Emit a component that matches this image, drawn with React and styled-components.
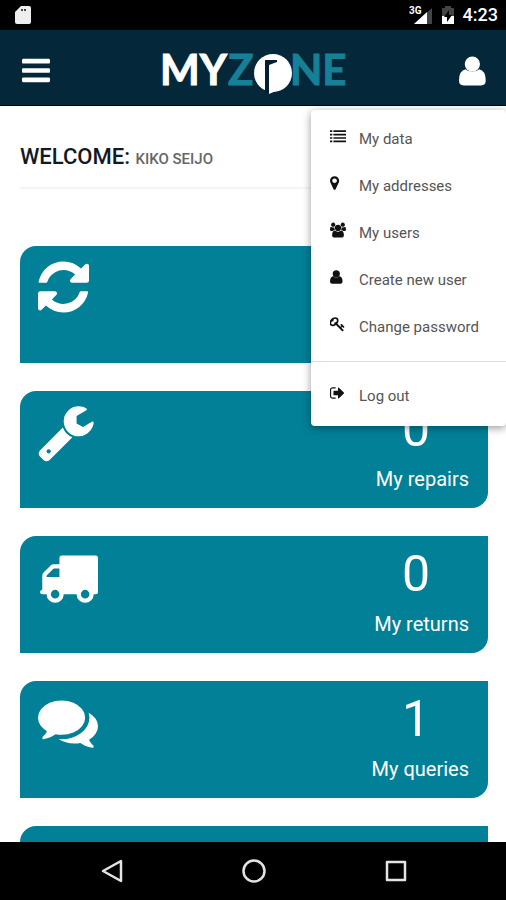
import React from 'react';
import styled, { createGlobalStyle } from 'styled-components';

const GlobalStyle = createGlobalStyle`
  * {
    box-sizing: border-box;
  }

  body {
    margin: 0;
    background-color: #fff;
    font-family: Roboto, sans-serif;
  }
`;

const Screen = styled.div`
  display: flex;
  flex-direction: column;
  height: 100vh;
  overflow: hidden;
`;

const StatusBar = styled.div`
  display: flex;
  flex-shrink: 0;
  align-items: center;
  gap: 8px;
  height: 30px;
  padding: 0 8px 0 14px;
  background-color: #000;
  color: #fff;
`;

const Clock = styled.time`
  font-size: 18px;
  font-weight: 500;
  line-height: 20px;
`;

const Signal = styled.svg`
  margin-left: auto;
`;

const Header = styled.header`
  position: relative;
  z-index: 1;
  display: flex;
  flex-shrink: 0;
  align-items: center;
  justify-content: space-between;
  height: 76px;
  padding: 6px 20px 0 22px;
  border-bottom: 1px solid #000;
  background-color: #04273a;
`;

const IconButton = styled.button`
  display: flex;
  padding: 0;
  border: 0;
  background: none;
  color: #fff;
`;

const Menu = styled.ul`
  position: absolute;
  top: 80px;
  right: 0;
  width: 195px;
  margin: 0;
  padding: 6px 0;
  border-radius: 4px;
  background-color: #fff;
  box-shadow: 0 2px 8px rgba(0, 0, 0, 0.4);
  list-style: none;
`;

const MenuItem = styled.li`
  ${({ divided }) => divided && `
    margin-top: 10px;
    padding-top: 11px;
    border-top: 1px solid #ddd;
  `}
`;

const MenuLink = styled.a`
  display: flex;
  gap: 13px;
  height: 47px;
  padding: 12px 18px 12px 19px;
  color: #555;
  font-size: 15px;
  line-height: 22px;
  text-decoration: none;
  white-space: nowrap;

  svg {
    color: #111;
  }
`;

const Content = styled.main`
  flex: 1;
  min-height: 0;
  overflow: hidden;
  padding: 36px 18px 0 20px;
`;

const Welcome = styled.h1`
  margin: 0 0 57px;
  padding-bottom: 16px;
  border-bottom: 2px solid #f4f4f4;
  color: #111a24;
  font-size: 22px;
  font-weight: 500;
  line-height: 29px;
`;

const UserName = styled.small`
  color: #666;
  font-size: 15px;
  line-height: 20px;
`;

const Cards = styled.div`
  display: flex;
  flex-direction: column;
  gap: 28px;
`;

const Card = styled.a`
  display: flex;
  justify-content: space-between;
  height: 117px;
  padding: 11px 19px 0 18px;
  border-radius: 16px 0;
  background-color: #028098;
  color: #fff;
  text-decoration: none;
`;

const CardInfo = styled.div`
  display: flex;
  flex-direction: column;
  align-items: flex-end;
`;

const Count = styled.span`
  padding-right: 39px;
  font-size: 50px;
  line-height: 54px;
`;

const CardLabel = styled.span`
  margin-top: 10px;
  font-size: 20px;
  line-height: 26px;
`;

const NavBar = styled.nav`
  display: flex;
  flex-shrink: 0;
  align-items: center;
  justify-content: center;
  gap: 116px;
  height: 58px;
  padding-left: 2px;
  background-color: #000;
`;

// [x, width, path], all glyphs are 1792 units high
const glyphs = {
  refresh: [128, 1536, 'M1639 1056q0 5-1 7-64 268-268 434.5t-478 166.5q-146 0-282.5-55t-243.5-157l-129 129q-19 19-45 19t-45-19-19-45v-448q0-26 19-45t45-19h448q26 0 45 19t19 45-19 45l-137 137q71 66 161 102t187 36q134 0 250-65t186-179q11-17 53-117 8-23 30-23h192q13 0 22.5 9.5t9.5 22.5zm25-800v448q0 26-19 45t-45 19h-448q-26 0-45-19t-19-45 19-45l138-138q-148-137-349-137-134 0-250 65t-186 179q-11 17-53 117-8 23-30 23h-199q-13 0-22.5-9.5t-9.5-22.5v-7q65-268 270-434.5t480-166.5q146 0 284 55.5t245 156.5l130-129q19-19 45-19t45 19 19 45z'],
  wrench: [64, 1664, 'M448 1472q0-26-19-45t-45-19-45 19-19 45 19 45 45 19 45-19 19-45zm644-420l-682 682q-37 37-90 37-52 0-91-37l-106-108q-38-36-38-90 0-53 38-91l681-681q39 98 114.5 173.5t173.5 114.5zm634-435q0 39-23 106-47 134-164.5 217.5t-258.5 83.5q-185 0-316.5-131.5t-131.5-316.5 131.5-316.5 316.5-131.5q58 0 121.5 16.5t107.5 46.5q16 11 16 28t-16 28l-293 169v224l193 107q5-3 79-48.5t135.5-81 70.5-35.5q15 0 23.5 10t8.5 25z'],
  truck: [0, 1792, 'M640 1408q0-52-38-90t-90-38-90 38-38 90 38 90 90 38 90-38 38-90zm-384-512h384v-256h-158q-13 0-22 9l-195 195q-9 9-9 22v30zm1280 512q0-52-38-90t-90-38-90 38-38 90 38 90 90 38 90-38 38-90zm256-1088v1024q0 15-4 26.5t-13.5 18.5-16.5 11.5-23.5 6-22.5 2-25.5 0-22.5-.5q0 106-75 181t-181 75-181-75-75-181h-384q0 106-75 181t-181 75-181-75-75-181h-64q-3 0-22.5.5t-25.5 0-22.5-2-23.5-6-16.5-11.5-13.5-18.5-4-26.5q0-26 19-45t45-19v-320q0-8-.5-35t0-38 2.5-34.5 6.5-37 14-30.5 22.5-30l198-198q19-19 50.5-32t58.5-13h160v-192q0-26 19-45t45-19h1024q26 0 45 19t19 45z'],
  comments: [0, 1792, 'M1408 768q0 139-94 257t-256.5 186.5-353.5 68.5q-86 0-176-16-124 88-278 128-36 9-86 16h-3q-11 0-20.5-8t-11.5-21q-1-3-1-6.5t.5-6.5 2-6l2.5-5 3.5-5.5 4-5 4.5-5 4-4.5q5-6 23-25t26-29.5 22.5-29 25-38.5 20.5-44q-124-72-195-177t-71-224q0-139 94-257t256.5-186.5 353.5-68.5 353.5 68.5 256.5 186.5 94 257zm384 256q0 120-71 224.5t-195 176.5q10 24 20.5 44t25 38.5 22.5 29 26 29.5 23 25q1 1 4 4.5t4.5 5 4 5 3.5 5.5l2.5 5 2 6 .5 6.5-1 6.5q-3 14-13 22t-22 7q-50-7-86-16-154-40-278-128-90 16-176 16-271 0-472-132 58 4 88 4 161 0 309-45t264-129q125-92 192-212t67-254q0-77-23-152 129 71 204 178t75 230z'],
  bars: [128, 1536, 'M1664 1344v128q0 26-19 45t-45 19h-1408q-26 0-45-19t-19-45v-128q0-26 19-45t45-19h1408q26 0 45 19t19 45zm0-512v128q0 26-19 45t-45 19h-1408q-26 0-45-19t-19-45v-128q0-26 19-45t45-19h1408q26 0 45 19t19 45zm0-512v128q0 26-19 45t-45 19h-1408q-26 0-45-19t-19-45v-128q0-26 19-45t45-19h1408q26 0 45 19t19 45z'],
  list: [0, 1792, 'M0 256h256v192H0zm384 0h1408v192H384zM0 640h256v192H0zm384 0h1408v192H384zM0 1024h256v192H0zm384 0h1408v192H384zM0 1408h256v192H0zm384 0h1408v192H384z'],
  marker: [384, 1024, 'M1152 640q0-106-75-181t-181-75-181 75-75 181 75 181 181 75 181-75 75-181zm256 0q0 109-33 179l-364 774q-16 33-47.5 52t-67.5 19-67.5-19-46.5-52l-365-774q-33-70-33-179 0-212 150-362t362-150 362 150 150 362z'],
  users: [0, 1920, 'M593 896q-162 5-265 128h-134q-82 0-138-40.5t-56-118.5q0-353 124-353 6 0 43.5 21t97.5 42.5 119 21.5q67 0 133-23-5 37-5 66 0 139 81 256zm1071 637q0 120-73 189.5t-194 69.5h-874q-121 0-194-69.5t-73-189.5q0-53 3.5-103.5t14-109 26.5-108.5 43-97.5 62-81 85.5-53.5 111.5-20q10 0 43 21.5t73 48 107 48 135 21.5 135-21.5 107-48 73-48 43-21.5q61 0 111.5 20t85.5 53.5 62 81 43 97.5 26.5 108.5 14 109 3.5 103.5zm-1024-1277q0 106-75 181t-181 75-181-75-75-181 75-181 181-75 181 75 75 181zm704 384q0 159-112.5 271.5t-271.5 112.5-271.5-112.5-112.5-271.5 112.5-271.5 271.5-112.5 271.5 112.5 112.5 271.5zm576 225q0 78-56 118.5t-138 40.5h-134q-103-123-265-128 81-117 81-256 0-29-5-66 66 23 133 23 59 0 119-21.5t97.5-42.5 43.5-21q124 0 124 353zm-128-609q0 106-75 181t-181 75-181-75-75-181 75-181 181-75 181 75 75 181z'],
  user: [192, 1408, 'M896 128a402 402 0 0 1 402 402a402 402 0 0 1-804 0a402 402 0 0 1 402-402zM540 800q156 150 356 150t356-150q348 70 348 590 0 274-250 274H442q-250 0-250-274 0-520 348-590z'],
  key: [64, 1664, 'M832 512q0-80-56-136t-136-56-136 56-56 136q0 42 19 83-41-19-83-19-80 0-136 56t-56 136 56 136 136 56 136-56 56-136q0-42-19-83 41 19 83 19 80 0 136-56t56-136zm851 704q0 17-49 66t-66 49q-9 0-28.5-16t-36.5-33-38.5-40-24.5-26l-96 96 220 220q28 28 28 68 0 42-39 81t-81 39q-40 0-68-28l-671-671q-176 131-365 131-163 0-265.5-102.5t-102.5-265.5q0-160 95-313t248-248 313-95q163 0 265.5 102.5t102.5 265.5q0 189-131 365l355 355 96-96q-3-3-26-24.5t-40-38.5-33-36.5-16-28.5q0-17 49-66t66-49q13 0 23 10 6 6 46 44.5t82 79.5 86.5 86 73 78 28.5 41z'],
  signOut: [64, 1664, 'M704 1440q0 4 1 20t.5 26.5-3 23.5-10 19.5-20.5 6.5h-320q-119 0-203.5-84.5t-84.5-203.5v-704q0-119 84.5-203.5t203.5-84.5h320q13 0 22.5 9.5t9.5 22.5q0 4 1 20t.5 26.5-3 23.5-10 19.5-20.5 6.5h-320q-66 0-113 47t-47 113v704q0 66 47 113t113 47h312l11.5 1 11.5 3 8 5.5 7 9 2 13.5zm928-544q0 26-19 45l-544 544q-19 19-45 19t-45-19-19-45v-288h-448q-26 0-45-19t-19-45v-384q0-26 19-45t45-19h448v-288q0-26 19-45t45-19 45 19l544 544q19 19 19 45z'],
};

const Glyph = ({ name, size, width }) => {
  const [x, w, path] = glyphs[name];
  return (
    <svg
      width={width || Math.round((size * w) / 1792)}
      height={size}
      viewBox={`${x} 0 ${w} 1792`}
      preserveAspectRatio="xMinYMid meet"
      fill="currentColor"
      aria-hidden="true"
    >
      <path d={path} />
    </svg>
  );
};

const Logo = () => (
  <svg width="190" height="60" viewBox="0 0 190 60" role="img" aria-label="MyZone">
    <g fontFamily="Lato, sans-serif" fontSize="42" fontWeight="700" strokeWidth="1">
      <text x="0" y="44" fill="#fff" stroke="#fff">MY</text>
      <text x="68" y="44" fill="#168096" stroke="#168096">Z</text>
      <text x="130" y="44" fill="#168096" stroke="#168096">NE</text>
    </g>
    <circle cx="113" cy="32" r="19" fill="#fff" />
    <path d="M105 19h12v2l-8 3v28h-4z" fill="#04202f" />
    <path d="M109 24v29l16-7V24z" fill="#fff" />
  </svg>
);

const menuItems = [
  { icon: 'list', label: 'My data' },
  { icon: 'marker', label: 'My addresses' },
  { icon: 'users', label: 'My users' },
  { icon: 'user', label: 'Create new user' },
  { icon: 'key', label: 'Change password' },
  { icon: 'signOut', label: 'Log out', divided: true },
];

const cards = [
  { icon: 'wrench', label: 'My repairs', count: 0 },
  { icon: 'truck', label: 'My returns', count: 0 },
  { icon: 'comments', label: 'My queries', count: 1 },
];

const App = () => (
  <Screen>
    <GlobalStyle />
    <StatusBar>
      <svg width="18" height="20" viewBox="0 0 18 20" aria-hidden="true">
        <path d="M7 1h8a2 2 0 0 1 2 2v14a2 2 0 0 1-2 2H3a2 2 0 0 1-2-2V7z" fill="#eee" />
        <path d="M7 5h6" stroke="#444" strokeWidth="2" strokeDasharray="2 1" />
      </svg>
      <Signal width="24" height="20" viewBox="0 0 24 20" aria-hidden="true">
        <path d="M23 3v16H5z" fill="#444" />
        <path d="M18 7v12H5z" fill="#fff" />
        <text x="0" y="9" fill="#fff" fontSize="10" fontWeight="700">3G</text>
      </Signal>
      <svg width="14" height="20" viewBox="0 0 14 20" aria-hidden="true">
        <path d="M4 1h6v2h3v16H1V3h3z" fill="#444" />
        <path d="M1 11h12v8H1z" fill="#fff" />
        <path d="M8 5l-5 7h3v5l5-7H8z" fill="#000" />
      </svg>
      <Clock>4:23</Clock>
    </StatusBar>
    <Header>
      <IconButton type="button" aria-label="Open navigation">
        <Glyph name="bars" size={33} />
      </IconButton>
      <Logo />
      <IconButton type="button" aria-label="Account">
        <Glyph name="user" size={34} />
      </IconButton>
      <Menu>
        {menuItems.map(({ icon, label, divided }) => (
          <MenuItem key={label} divided={divided}>
            <MenuLink href="#">
              <Glyph name={icon} size={16} width={16} />
              {label}
            </MenuLink>
          </MenuItem>
        ))}
      </Menu>
    </Header>
    <Content>
      <Welcome>
        WELCOME: <UserName>KIKO SEIJO</UserName>
      </Welcome>
      <Cards>
        <Card href="#" aria-label="Refresh">
          <Glyph name="refresh" size={60} />
        </Card>
        {cards.map(({ icon, label, count }) => (
          <Card key={label} href="#">
            <Glyph name={icon} size={60} />
            <CardInfo>
              <Count>{count}</Count>
              <CardLabel>{label}</CardLabel>
            </CardInfo>
          </Card>
        ))}
        <Card href="#" aria-label="More" />
      </Cards>
    </Content>
    <NavBar>
      <IconButton type="button" aria-label="Back">
        <svg width="26" height="26" viewBox="0 0 26 26" fill="none" stroke="#e4e4e4" strokeWidth="2.500" strokeLinejoin="round">
          <path d="M22 3v20L4 13z" />
        </svg>
      </IconButton>
      <IconButton type="button" aria-label="Home">
        <svg width="26" height="26" viewBox="0 0 26 26" fill="none" stroke="#e4e4e4" strokeWidth="2.500">
          <circle cx="13" cy="13" r="10.500" />
        </svg>
      </IconButton>
      <IconButton type="button" aria-label="Recent apps">
        <svg width="26" height="26" viewBox="0 0 26 26" fill="none" stroke="#e4e4e4" strokeWidth="2.500" strokeLinejoin="round">
          <path d="M4 4h18v18H4z" />
        </svg>
      </IconButton>
    </NavBar>
  </Screen>
);

export default App;
